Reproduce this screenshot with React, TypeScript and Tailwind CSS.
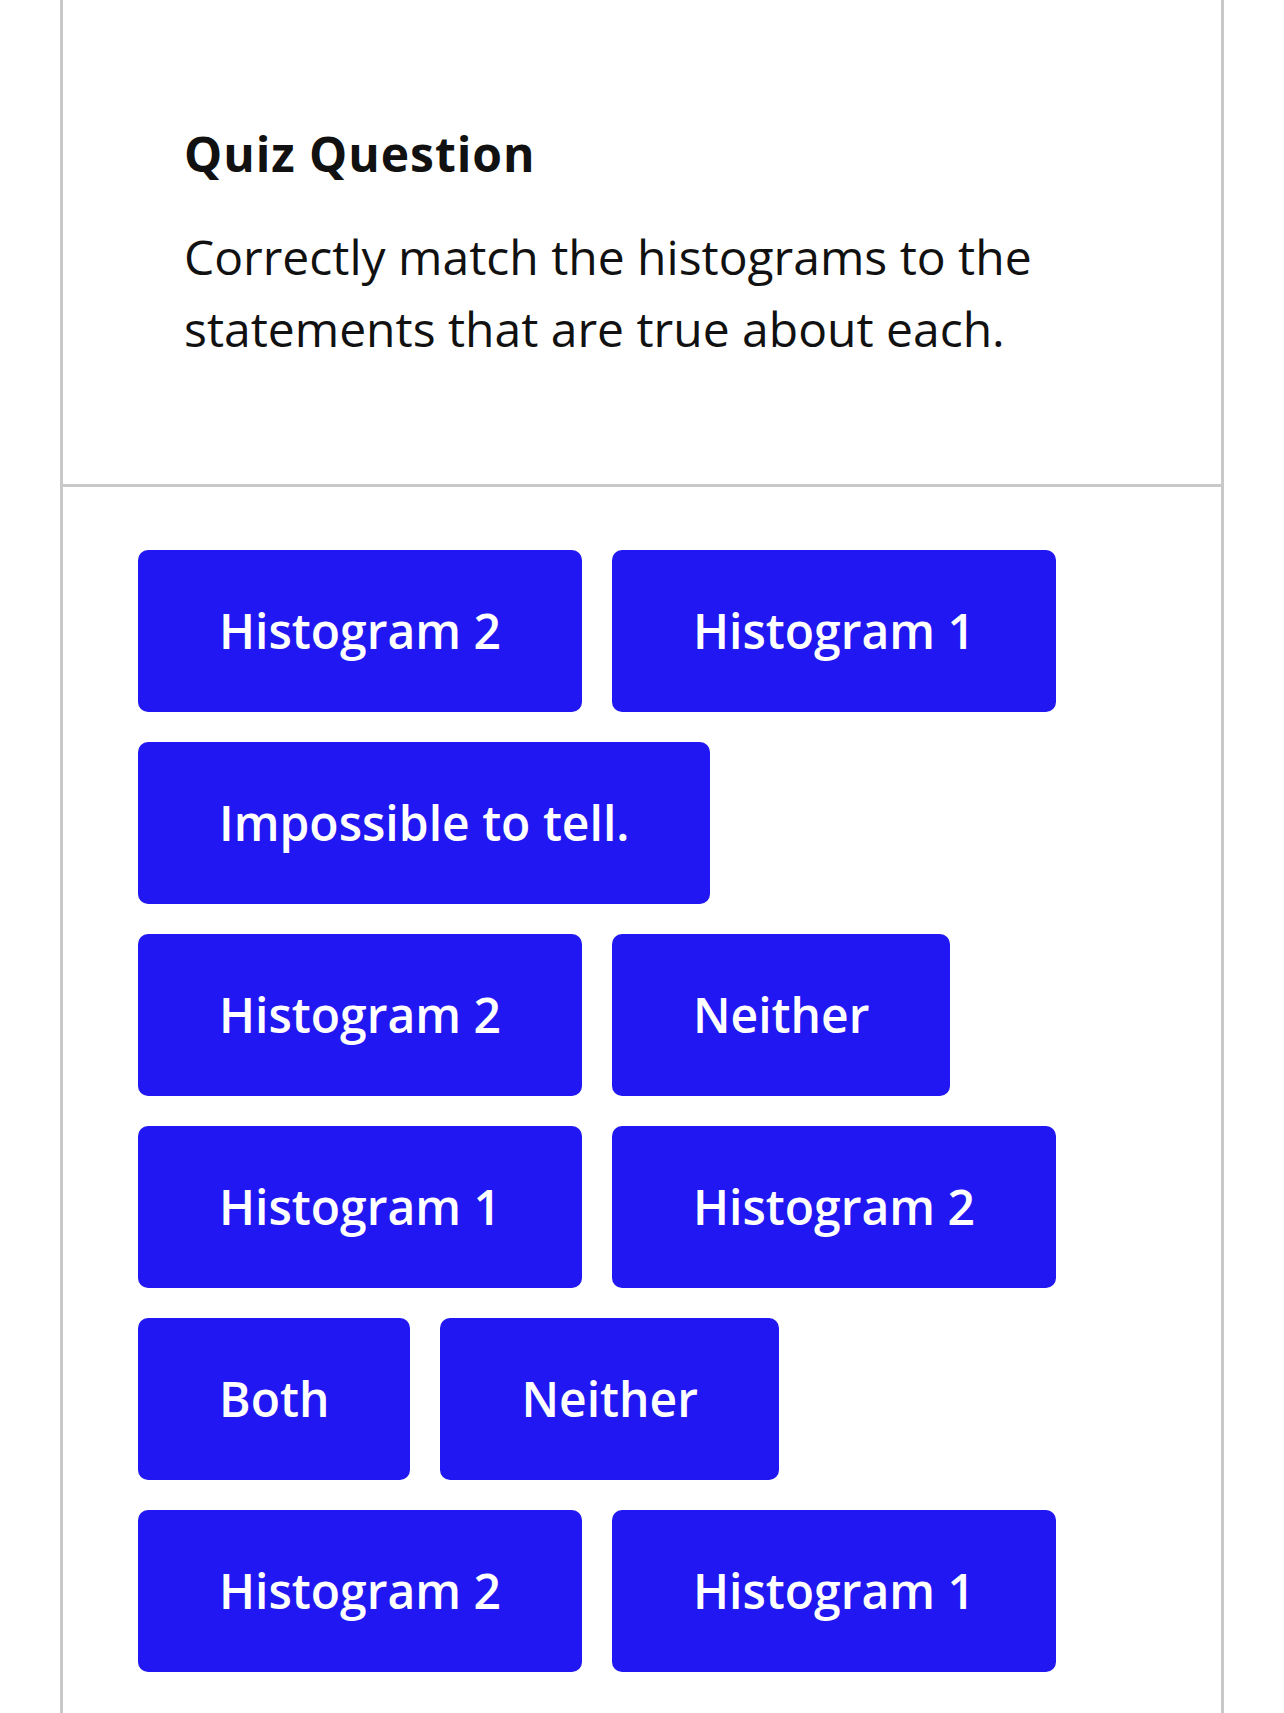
import React from 'react';

const answers = [
  'Histogram 2',
  'Histogram 1',
  'Impossible to tell.',
  'Histogram 2',
  'Neither',
  'Histogram 1',
  'Histogram 2',
  'Both',
  'Neither',
  'Histogram 2',
  'Histogram 1',
];

const App: React.FC = () => {
  return (
    <div className="min-h-screen bg-white text-[#111111]" style={{ fontFamily: '"Open Sans", "Noto Sans", sans-serif' }}>
      <div className="mx-[60px] min-h-[1713px] border-x-[3px] border-[#c8c8c8]">
        {/* question header */}
        <div className="px-[121px] pt-[118px] pb-[119px]">
          <h2 className="text-[48px] font-bold leading-[72px] tracking-[0.02em]">Quiz Question</h2>
          <p className="mt-[31px] text-[48px] leading-[72px]">
            Correctly match the histograms to the statements that are true about each.
          </p>
        </div>

        {/* answer chips */}
        <div className="border-t-[3px] border-[#c8c8c8] px-[75px] pt-[63px]">
          <div className="flex flex-wrap gap-x-[30px] gap-y-[30px]">
            {answers.map((label, i) => (
              <button
                key={i}
                className="rounded-[10px] bg-[#2117f2] px-[81px] py-[45px] text-[48px] font-semibold leading-[72px] text-white"
              >
                {label}
              </button>
            ))}
          </div>
        </div>
      </div>
    </div>
  );
};

export default App;
